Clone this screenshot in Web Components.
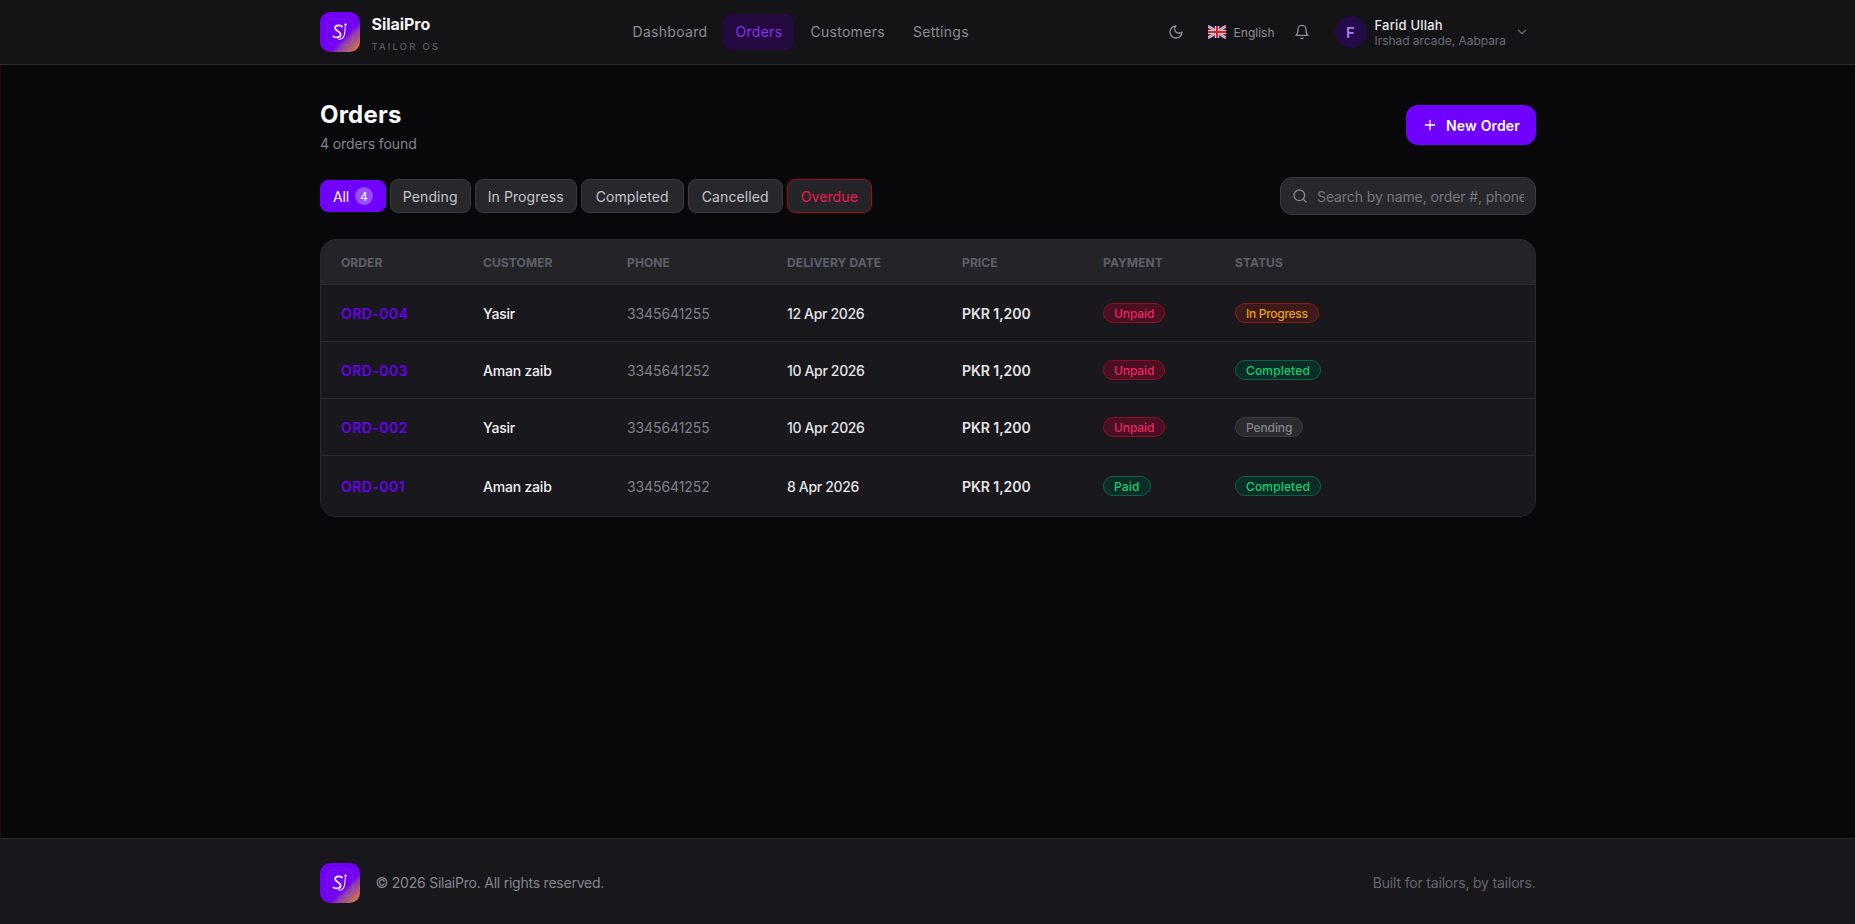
<!DOCTYPE html>
<html lang="en">
<head>
<meta charset="utf-8">
<title>SilaiPro - Orders</title>
<style>
  html, body { margin: 0; height: 100%; }
  body {
    background: #08080b;
    color: #f2f2f4;
    font-family: Inter, "Noto Sans", sans-serif;
    display: flex;
    flex-direction: column;
    min-height: 924px;
  }
  orders-page { flex: 1; }
</style>
</head>
<body>
<app-header></app-header>
<orders-page>
  <order-row order="ORD-004" customer="Yasir" phone="3345641255" date="12 Apr 2026" price="PKR 1,200" payment="Unpaid" status="In Progress"></order-row>
  <order-row order="ORD-003" customer="Aman zaib" phone="3345641252" date="10 Apr 2026" price="PKR 1,200" payment="Unpaid" status="Completed"></order-row>
  <order-row order="ORD-002" customer="Yasir" phone="3345641255" date="10 Apr 2026" price="PKR 1,200" payment="Unpaid" status="Pending"></order-row>
  <order-row class="last" order="ORD-001" customer="Aman zaib" phone="3345641252" date="8 Apr 2026" price="PKR 1,200" payment="Paid" status="Completed"></order-row>
</orders-page>
<app-footer></app-footer>

<script>
let logoCount = 0;

class SilaiLogo extends HTMLElement {
  connectedCallback() {
    const id = "logo-grad-" + (++logoCount);
    this.attachShadow({ mode: "open" }).innerHTML = `
      <style>
        :host { display: block; width: 40px; height: 40px; flex: none; }
        svg { display: block; }
      </style>
      <svg width="40" height="40" viewBox="0 0 40 40" fill="none">
        <defs>
          <linearGradient id="${id}" x1="0" y1="0" x2="1" y2="1">
            <stop offset="0" stop-color="#6f00f8"/>
            <stop offset=".62" stop-color="#7400f0"/>
            <stop offset=".7" stop-color="#8c3cb0"/>
            <stop offset="1" stop-color="#e08c20"/>
          </linearGradient>
        </defs>
        <rect width="40" height="40" rx="10" fill="url(#${id})"/>
        <rect x="7" y="7" width="26" height="26" rx="6" stroke="#fff" stroke-opacity=".14" stroke-width=".6"/>
        <path d="M22 14.500c-1.700-1.400-6.600-1.700-7 1.200-.4 3 6 3.600 5.600 7.100-.3 2.700-4.800 3.500-7.200 1.600" stroke="#f3e9ff" stroke-width="1.800" stroke-linecap="round"/>
        <path d="M25.300 14.500c-.2 3.500-.4 6.500-1 8.600-.7 2.400-3.200 4.600-5.600 4" stroke="#f3e9ff" stroke-width="1.100" stroke-linecap="round"/>
        <circle cx="25.500" cy="12.600" r="1.200" fill="#f3e9ff"/>
      </svg>`;
  }
}

class AppHeader extends HTMLElement {
  connectedCallback() {
    this.attachShadow({ mode: "open" }).innerHTML = `
      <style>
        :host {
          display: block;
          background: #141417;
          border-bottom: 1px solid #2a2a2e;
        }
        .bar {
          box-sizing: border-box;
          max-width: 1280px;
          height: 64px;
          margin: 0 auto;
          padding: 0 32px;
          display: flex;
          align-items: center;
        }
        .brand { display: flex; align-items: center; gap: 12px; width: 301px; }
        .name { font-size: 16px; font-weight: 700; line-height: 20px; letter-spacing: -.05px; margin-top: 3px; }
        .tag { font-size: 9.500px; line-height: 12px; letter-spacing: 2.200px; color: #66666f; margin-top: 7px; }
        nav { display: flex; gap: 4px; }
        nav a {
          font-size: 14px;
          line-height: 36px;
          padding: 0 12px;
          border-radius: 8px;
          color: #8b8b94;
          letter-spacing: .3px;
        }
        nav a.on { background: #230b3f; color: #8b2cf5; }
        .right { margin-left: auto; display: flex; align-items: center; color: #8f8f97; }
        .right svg { display: block; }
        .lang { display: flex; align-items: center; gap: 8px; font-size: 12px; margin-left: 24px; }
        .bell { margin-left: 19px; }
        .user { display: flex; align-items: center; margin-left: 25px; margin-right: 7px; }
        .avatar {
          width: 32px; height: 32px; border-radius: 50%;
          background: #230b4a; color: #a07ff0;
          display: flex; align-items: center; justify-content: center;
          font-size: 15px; font-weight: 600;
        }
        .who { margin-left: 8px; width: 140px; }
        .who b { display: block; font-size: 13px; font-weight: 500; line-height: 16px; color: #e6e6e9; letter-spacing: .2px; margin-bottom: 1px; }
        .who span { display: block; font-size: 12px; line-height: 14px; color: #6b6b75; letter-spacing: -.04px; white-space: nowrap; }
      </style>
      <div class="bar">
        <div class="brand">
          <silai-logo></silai-logo>
          <div>
            <div class="name">SilaiPro</div>
            <div class="tag">TAILOR OS</div>
          </div>
        </div>
        <nav>
          <a>Dashboard</a>
          <a class="on">Orders</a>
          <a>Customers</a>
          <a>Settings</a>
        </nav>
        <div class="right">
          <svg width="16" height="16" viewBox="0 0 24 24" fill="none" stroke="currentColor" stroke-width="2" stroke-linecap="round" stroke-linejoin="round"><path d="M12 3a6 6 0 0 0 9 9 9 9 0 1 1-9-9Z"/></svg>
          <div class="lang">
            <svg width="18" height="14" viewBox="0 0 60 40">
              <rect width="60" height="40" fill="#23306e"/>
              <path d="M0 0 60 40M60 0 0 40" stroke="#fff" stroke-width="8"/>
              <path d="M0 0 60 40M60 0 0 40" stroke="#d8202f" stroke-width="3"/>
              <path d="M30 0V40M0 20H60" stroke="#fff" stroke-width="13"/>
              <path d="M30 0V40M0 20H60" stroke="#d8202f" stroke-width="8"/>
            </svg>
            <span>English</span>
          </div>
          <svg class="bell" width="16" height="16" viewBox="0 0 24 24" fill="none" stroke="currentColor" stroke-width="2" stroke-linecap="round" stroke-linejoin="round"><path d="M10.300 21a1.940 1.940 0 0 0 3.400 0"/><path d="M6 8a6 6 0 0 1 12 0c0 7 3 9 3 9H3s3-2 3-9"/></svg>
          <div class="user">
            <div class="avatar">F</div>
            <div class="who"><b>Farid Ullah</b><span>Irshad arcade, Aabpara</span></div>
            <svg width="14" height="14" viewBox="0 0 24 24" fill="none" stroke="#6b6b75" stroke-width="2" stroke-linecap="round" stroke-linejoin="round"><path d="m6 9 6 6 6-6"/></svg>
          </div>
        </div>
      </div>`;
  }
}

class FilterTab extends HTMLElement {
  connectedCallback() {
    this.attachShadow({ mode: "open" }).innerHTML = `
      <style>
        :host {
          display: inline-flex;
          align-items: center;
          box-sizing: border-box;
          height: 34px;
          padding: 0 12px;
          border: 1px solid #3a3a40;
          border-radius: 8px;
          background: #27272c;
          color: #c6c6cc;
          font-size: 14px;
          letter-spacing: .1px;
        }
        :host([wide]) { padding: 0 13px; }
        :host([wider]) { padding: 0 14px; }
        :host([active]) { height: 32px; background: #7000ff; border-color: #7000ff; color: #fff; gap: 6px; letter-spacing: -.2px; }
        :host([danger]) { border-color: #9c0d20; color: #f0184f; background: #242429; }
      </style>
      <slot></slot>`;
  }
}

class StatusPill extends HTMLElement {
  connectedCallback() {
    this.attachShadow({ mode: "open" }).innerHTML = `
      <style>
        :host {
          display: inline-flex;
          align-items: center;
          box-sizing: border-box;
          height: 20px;
          padding: 0 10px;
          border: 1px solid;
          border-radius: 10px;
          font-size: 12px;
          font-weight: 500;
          letter-spacing: -.1px;
          white-space: nowrap;
        }
        :host([tone="red"]) { background: #4a0f22; border-color: #8f0e1f; color: #ee2560; }
        :host([tone="amber"]) { background: #3c1a1a; border-color: #8f1c10; color: #e8a020; letter-spacing: -.3px; }
        :host([tone="green"]) { background: #0c2c25; border-color: #0a6345; color: #10cf74; letter-spacing: .15px; }
        :host([tone="grey"]) { background: #2a2a2f; border-color: #3a3a40; color: #85858e; }
      </style>
      <slot></slot>`;
  }
}

const toneFor = {
  "Unpaid": "red",
  "Paid": "green",
  "In Progress": "amber",
  "Completed": "green",
  "Pending": "grey"
};

const rowColumns = "142px 144px 160px 175px 141px 132px 1fr";

class OrderRow extends HTMLElement {
  connectedCallback() {
    const a = (n) => this.getAttribute(n);
    this.attachShadow({ mode: "open" }).innerHTML = `
      <style>
        :host {
          display: grid;
          grid-template-columns: ${rowColumns};
          align-items: center;
          box-sizing: border-box;
          height: 57px;
          padding-left: 20px;
          border-top: 1px solid #2a2a30;
          font-size: 14px;
          background: #18181d;
        }
        :host(.last) { height: 61px; }
        .id { color: #6a00f0; font-weight: 600; letter-spacing: .45px; }
        .cust { color: #f0f0f2; font-weight: 500; letter-spacing: -.2px; }
        .phone { color: #7f7f88; letter-spacing: -.1px; }
        .date { color: #e4e4e7; font-weight: 500; letter-spacing: -.35px; }
        .price { color: #e4e4e7; font-weight: 600; letter-spacing: -.05px; }
      </style>
      <div class="id">${a("order")}</div>
      <div class="cust">${a("customer")}</div>
      <div class="phone">${a("phone")}</div>
      <div class="date">${a("date")}</div>
      <div class="price">${a("price")}</div>
      <div><status-pill tone="${toneFor[a("payment")]}">${a("payment")}</status-pill></div>
      <div><status-pill tone="${toneFor[a("status")]}">${a("status")}</status-pill></div>`;
  }
}

class OrdersPage extends HTMLElement {
  connectedCallback() {
    const heads = ["Order", "Customer", "Phone", "Delivery Date", "Price", "Payment", "Status"];
    this.attachShadow({ mode: "open" }).innerHTML = `
      <style>
        :host { display: block; border-left: 1px solid #1c0a12; }
        .wrap {
          box-sizing: border-box;
          max-width: 1280px;
          margin: 0 auto;
          padding: 33px 32px 0;
        }
        .top { display: flex; align-items: center; justify-content: space-between; margin-bottom: 23px; }
        h1 { margin: 1px 0 0; font-size: 24px; line-height: 32px; font-weight: 700; letter-spacing: .2px; color: #fbfbfc; }
        .count { margin-top: 3px; font-size: 14px; line-height: 20px; color: #85858f; letter-spacing: -.1px; }
        .new {
          display: flex; align-items: center; gap: 8px;
          height: 40px; padding: 0 16px;
          background: #7000ff; color: #fff;
          border: 0; border-radius: 12px;
          font: 600 14px Inter, sans-serif;
          letter-spacing: .15px;
          margin-top: -2px;
        }
        .filters { display: flex; align-items: center; justify-content: space-between; margin-bottom: 24px; }
        .tabs { display: flex; align-items: center; gap: 4px; }
        .badge {
          width: 18px; height: 18px; border-radius: 50%;
          background: #9a4dff; color: #fff;
          font-size: 12px;
          display: flex; align-items: center; justify-content: center;
        }
        .search {
          box-sizing: border-box;
          width: 256px; height: 38px;
          display: flex; align-items: center; gap: 9px;
          padding: 0 11px;
          background: #27272c;
          border: 1px solid #3a3a40;
          border-radius: 12px;
          color: #85858e;
        }
        .search svg { flex: none; }
        input {
          flex: 1; min-width: 0;
          border: 0; outline: 0; padding: 0;
          background: transparent;
          color: #e4e4e7;
          font: 14px Inter, sans-serif;
          letter-spacing: -.1px;
        }
        input::placeholder { color: #77777f; opacity: 1; }
        .table {
          border: 1px solid #2a2a30;
          border-radius: 16px;
          overflow: hidden;
          background: #18181d;
        }
        .head {
          display: grid;
          grid-template-columns: ${rowColumns};
          align-items: center;
          height: 44px;
          padding-left: 20px;
          background: #232328;
          font-size: 12px;
          font-weight: 700;
          letter-spacing: .1px;
          color: #5f5f68;
        }
      </style>
      <div class="wrap">
        <div class="top">
          <div>
            <h1>Orders</h1>
            <div class="count">4 orders found</div>
          </div>
          <button class="new">
            <svg width="16" height="16" viewBox="0 0 24 24" fill="none" stroke="currentColor" stroke-width="2" stroke-linecap="round"><path d="M5 12h14M12 5v14"/></svg>
            New Order
          </button>
        </div>
        <div class="filters">
          <div class="tabs">
            <filter-tab active>All <span class="badge">4</span></filter-tab>
            <filter-tab>Pending</filter-tab>
            <filter-tab>In Progress</filter-tab>
            <filter-tab wider>Completed</filter-tab>
            <filter-tab wide>Cancelled</filter-tab>
            <filter-tab wide danger>Overdue</filter-tab>
          </div>
          <label class="search">
            <svg width="16" height="16" viewBox="0 0 24 24" fill="none" stroke="currentColor" stroke-width="2" stroke-linecap="round"><circle cx="11" cy="11" r="8"/><path d="m21 21-4.300-4.300"/></svg>
            <input placeholder="Search by name, order #, phone...">
          </label>
        </div>
        <div class="table">
          <div class="head">${heads.map((h) => `<div>${h.toUpperCase()}</div>`).join("")}</div>
          <slot></slot>
        </div>
      </div>`;
  }
}

class AppFooter extends HTMLElement {
  connectedCallback() {
    this.attachShadow({ mode: "open" }).innerHTML = `
      <style>
        :host {
          display: block;
          background: #17171c;
          border-top: 1px solid #26262b;
        }
        .bar {
          box-sizing: border-box;
          max-width: 1280px;
          height: 85px;
          margin: 0 auto;
          padding: 2px 32px 0;
          display: flex;
          align-items: center;
          font-size: 14px;
        }
        .copy { margin-left: 16px; color: #85858f; letter-spacing: -.23px; }
        .made { margin-left: auto; color: #66666f; letter-spacing: -.18px; }
      </style>
      <div class="bar">
        <silai-logo></silai-logo>
        <div class="copy">© 2026 SilaiPro. All rights reserved.</div>
        <div class="made">Built for tailors, by tailors.</div>
      </div>`;
  }
}

customElements.define("silai-logo", SilaiLogo);
customElements.define("app-header", AppHeader);
customElements.define("filter-tab", FilterTab);
customElements.define("status-pill", StatusPill);
customElements.define("order-row", OrderRow);
customElements.define("orders-page", OrdersPage);
customElements.define("app-footer", AppFooter);
</script>
</body>
</html>
